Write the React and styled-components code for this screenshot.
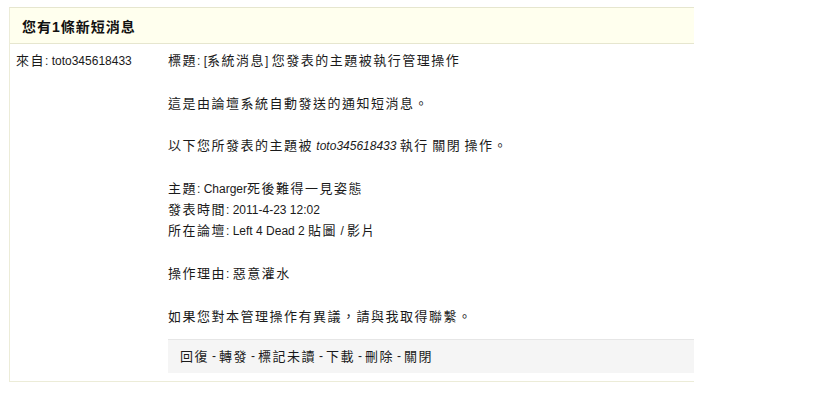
import React from 'react';
import styled, { createGlobalStyle } from 'styled-components';

const Global = createGlobalStyle`
  html, body {
    margin: 0;
    padding: 0;
    background: #fff;
  }
  body {
    font-family: "Liberation Sans", "Noto Sans CJK TC", sans-serif;
    color: #1a1a1a;
  }
`;

const Page = styled.div`
  padding: 7px 0 0 9px;
`;

const Box = styled.div`
  width: 685px;
  border-top: 1px solid #e6e6cf;
  border-left: 1px solid #ececd8;
  border-bottom: 1px solid #ececd8;
  box-sizing: border-box;
`;

const Header = styled.div`
  height: 35px;
  display: flex;
  align-items: center;
  padding-left: 12px;
  background: #ffffee;
  border-bottom: 1px solid #e6e6cf;
  font-size: 14px;
  font-weight: bold;
  letter-spacing: 1px;
  color: #111;
`;

const Body = styled.div`
  display: flex;
  padding: 6px 0 8px;
`;

const Sender = styled.div`
  width: 152px;
  padding-left: 6px;
  font-size: 13px;
  letter-spacing: 1.5px;
  line-height: 21.3px;
`;

const Content = styled.div`
  flex: 1;
  font-size: 13px;
  letter-spacing: 1.5px;
  line-height: 21.3px;
`;

const Para = styled.p`
  margin: 0 0 ${p => (p.$tight ? 0 : '21.3px')};
  height: 21.3px;
  white-space: nowrap;
`;

const Latin = styled.span`
  font-size: 12px;
  line-height: 1;
  letter-spacing: 0;
  font-style: ${p => (p.$italic ? 'italic' : 'normal')};
`;

const Actions = styled.div`
  margin-top: 12px;
  height: 33px;
  display: flex;
  align-items: center;
  padding-left: 12px;
  background: #f5f5f5;
  border-top: 1px solid #e6e6e6;
`;

const Sep = styled.span`
  font-size: 12px;
  letter-spacing: 0;
  padding: 0 3px;
`;

const actions = ['回復', '轉發', '標記未讀', '下載', '刪除', '關閉'];

export default function App() {
  return (
    <Page>
      <Global />
      <Box>
        <Header>您有1條新短消息</Header>
        <Body>
          <Sender>
            來自<Latin>: toto345618433</Latin>
          </Sender>
          <Content>
            <Para>標題<Latin>: [</Latin>系統消息<Latin>] </Latin>您發表的主題被執行管理操作</Para>
            <Para>這是由論壇系統自動發送的通知短消息。</Para>
            <Para>
              以下您所發表的主題被<Latin> </Latin><Latin $italic>toto345618433</Latin><Latin> </Latin>執行<Latin> </Latin>關閉<Latin> </Latin>操作。
            </Para>
            <Para $tight>主題<Latin>: Charger</Latin>死後難得一見姿態</Para>
            <Para $tight>發表時間<Latin>: 2011-4-23 12:02</Latin></Para>
            <Para>所在論壇<Latin>: Left 4 Dead 2 </Latin>貼圖<Latin> / </Latin>影片</Para>
            <Para>操作理由<Latin>: </Latin>惡意灌水</Para>
            <Para $tight>如果您對本管理操作有異議，請與我取得聯繫。</Para>
            <Actions>
              {actions.map((a, i) => (
                <React.Fragment key={a}>
                  {i > 0 && <Sep>-</Sep>}
                  {a}
                </React.Fragment>
              ))}
            </Actions>
          </Content>
        </Body>
      </Box>
    </Page>
  );
}
